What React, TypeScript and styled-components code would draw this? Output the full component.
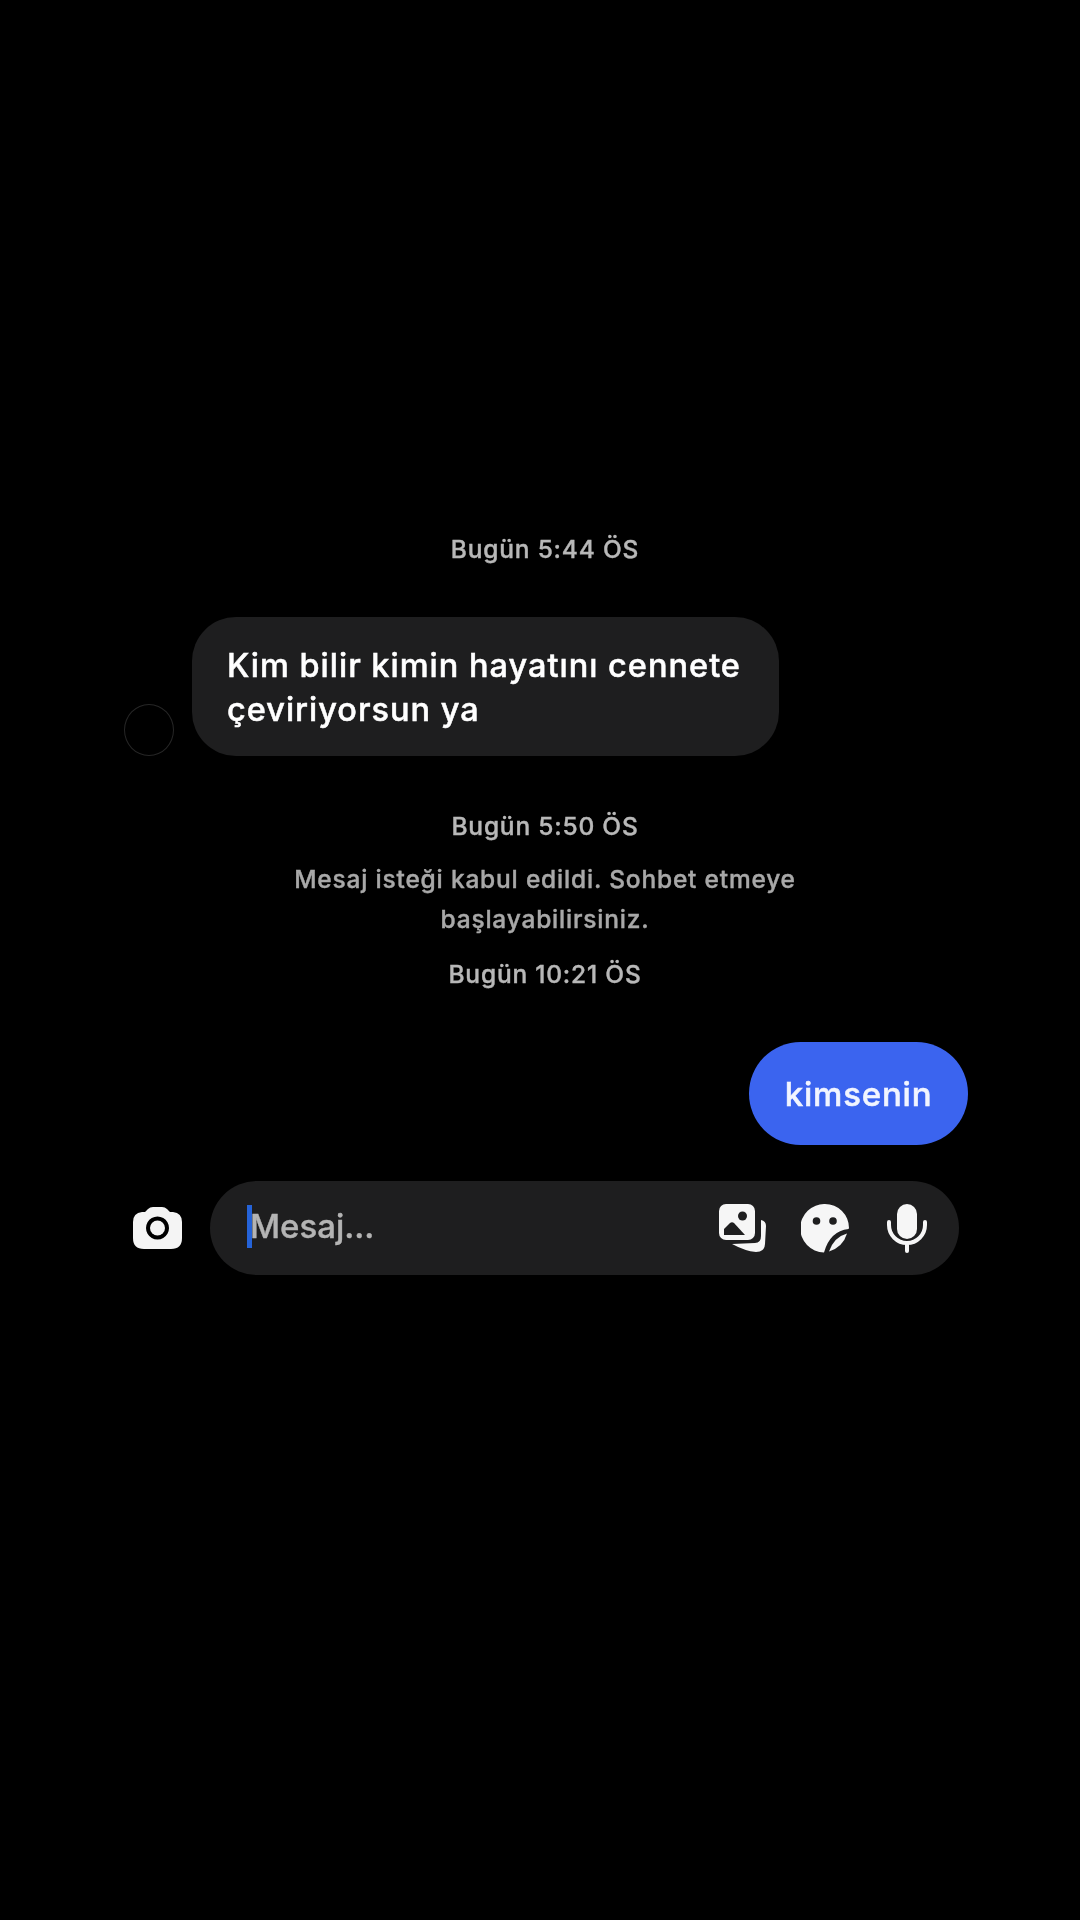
import React from "react";
import styled, { createGlobalStyle } from "styled-components";

const Global = createGlobalStyle`
  html, body { margin: 0; padding: 0; background: #000; }
`;

const Screen = styled.main`
  width: 1080px;
  height: 1920px;
  background: #000;
  padding-top: 529px;
  box-sizing: border-box;
  display: flex;
  flex-direction: column;
  font-family: Inter, "Liberation Sans", sans-serif;
`;

const Stamp = styled.div<{ $top?: number }>`
  height: 40px;
  line-height: 40px;
  margin-top: ${(p) => p.$top ?? 0}px;
  padding-left: 10px;
  text-align: center;
  font-size: 24.5px;
  letter-spacing: 0.8px;
  font-weight: 500;
  -webkit-text-stroke: 0.4px currentColor;
  color: #b8b8b8;
  filter: blur(0.5px);
`;

const IncomingRow = styled.div`
  display: flex;
  align-items: flex-end;
  margin: 48px 0 0 124px;
  gap: 18px;
`;

const Avatar = styled.div`
  width: 50px;
  height: 52px;
  border-radius: 50%;
  border: 1px solid #262626;
  box-sizing: border-box;
`;

const IncomingBubble = styled.div`
  width: 587px;
  height: 139px;
  box-sizing: border-box;
  padding: 27px 0 0 35px;
  border-radius: 44px;
  background: #1e1e1f;
  color: #fff;
  font-size: 32.5px;
  letter-spacing: 1px;
  line-height: 44px;
  font-weight: 500;
  -webkit-text-stroke: 0.5px currentColor;
  filter: blur(0.5px);
`;

const Notice = styled.div`
  margin-top: 13px;
  padding-left: 10px;
  text-align: center;
  font-size: 24.5px;
  letter-spacing: 0.8px;
  line-height: 40px;
  font-weight: 500;
  -webkit-text-stroke: 0.4px currentColor;
  color: #a8a8a8;
  filter: blur(0.6px);
`;

const OutgoingRow = styled.div`
  display: flex;
  justify-content: flex-end;
  margin: 48px 112px 0 0;
`;

const OutgoingBubble = styled.div`
  width: 219px;
  height: 103px;
  border-radius: 52px;
  background: #3b64ef;
  color: #f2f5ff;
  font-size: 33px;
  letter-spacing: 0.8px;
  font-weight: 500;
  -webkit-text-stroke: 0.5px currentColor;
  display: flex;
  align-items: center;
  justify-content: center;
  filter: blur(0.5px);
`;

const Composer = styled.div`
  display: flex;
  align-items: center;
  margin: 36px 121px 0 133px;
`;

const CameraIcon = styled.svg`
  width: 49px;
  height: 42px;
  flex: none;
  margin-right: 28px;
  filter: blur(0.5px);
`;

const InputPill = styled.div`
  flex: 1;
  height: 94px;
  border-radius: 47px;
  background: #1e1e1f;
  display: flex;
  align-items: center;
  padding: 0 32px 0 37px;
`;

const Caret = styled.span`
  width: 5px;
  height: 43px;
  background: #2563d8;
  flex: none;
  margin-top: -4px;
  filter: blur(0.4px);
`;

const Placeholder = styled.span`
  flex: 1;
  margin-left: -2px;
  color: #b4b4b4;
  font-size: 33px;
  font-weight: 500;
  -webkit-text-stroke: 0.4px currentColor;
  margin-top: -4px;
  filter: blur(0.5px);
`;

const Tools = styled.div`
  display: flex;
  align-items: center;
`;

const ToolIcon = styled.svg<{ $w: number; $gap?: number }>`
  width: ${(p) => p.$w}px;
  height: 49px;
  margin-left: ${(p) => p.$gap ?? 0}px;
  flex: none;
  filter: blur(0.5px);
`;

export default function App() {
  return (
    <>
      <Global />
      <Screen>
        <Stamp>Bugün 5:44 ÖS</Stamp>
        <IncomingRow>
          <Avatar />
          <IncomingBubble>
            Kim bilir kimin hayatını cennete
            <br />
            çeviriyorsun ya
          </IncomingBubble>
        </IncomingRow>
        <Stamp $top={50}>Bugün 5:50 ÖS</Stamp>
        <Notice>
          Mesaj isteği kabul edildi. Sohbet etmeye
          <br />
          başlayabilirsiniz.
        </Notice>
        <Stamp $top={15}>Bugün 10:21 ÖS</Stamp>
        <OutgoingRow>
          <OutgoingBubble>kimsenin</OutgoingBubble>
        </OutgoingRow>
        <Composer>
          <CameraIcon viewBox="0 0 49 42">
            <path
              fill="#f4f4f4"
              fillRule="evenodd"
              d="M12 5 L15 2 Q17 0 20 0 H29 Q32 0 34 2 L37 5 H40 Q49 6 49 15 V31 Q49 42 38 42 H11 Q0 42 0 31 V15 Q0 6 9 5 Z M24.500 9.500 a11.500 11.500 0 1 0 0.01 0 Z"
            />
            <circle cx="24.500" cy="21" r="7.500" fill="#f4f4f4" />
          </CameraIcon>
          <InputPill>
            <Caret />
            <Placeholder>Mesaj...</Placeholder>
            <Tools>
              <ToolIcon $w={48} viewBox="0 0 48 49">
                <path
                  fill="#f6f6f6"
                  d="M42 16 Q47 17 47 22 L46 40 Q45.500 48 37 48 Q26 47 13 40 L36 39 Q42 39 42 32 Z"
                />
                <rect x="0" y="0" width="36" height="36" rx="7" fill="#f6f6f6" />
                <circle cx="23.500" cy="12" r="4.500" fill="#1e1e1f" />
                <path d="M5 31 V25 L11 19 Q13 17.500 15 19 L26 31 Z" fill="#1e1e1f" />
              </ToolIcon>
              <ToolIcon $w={48} $gap={34} viewBox="0 0 48 49">
                <path
                  fill="#f6f6f6"
                  d="M24 0 A24 24 0 0 1 48 24 L47.500 25 Q29 27 23 48.500 A24 24 0 0 1 24 0 Z"
                />
                <circle cx="15.500" cy="17" r="3.800" fill="#1e1e1f" />
                <circle cx="32" cy="17" r="3.800" fill="#1e1e1f" />
                <path fill="#f6f6f6" d="M28 47.500 Q33 33 46 29.500 Q42 43 28 47.500 Z" />
              </ToolIcon>
              <ToolIcon $w={40} $gap={38} viewBox="0 0 40 49">
                <rect x="10" y="0" width="20" height="35" rx="10" fill="#f6f6f6" />
                <path
                  d="M2 18 V21 A18 18 0 0 0 38 21 V18"
                  fill="none"
                  stroke="#f6f6f6"
                  strokeWidth="4"
                  strokeLinecap="round"
                />
                <path d="M20 39 V47" stroke="#f6f6f6" strokeWidth="4" strokeLinecap="round" />
              </ToolIcon>
            </Tools>
          </InputPill>
        </Composer>
      </Screen>
    </>
  );
}
